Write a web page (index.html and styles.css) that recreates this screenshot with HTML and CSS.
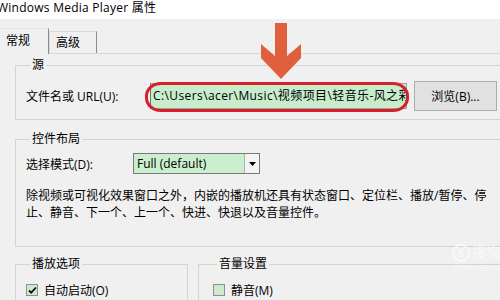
FILE: index.html
```html
<!DOCTYPE html>
<html>
	<head>
		<meta charset="utf-8">
		<title>Windows Media Player 属性</title>
		<link rel="stylesheet" href="styles.css">
	</head>

	<body>
		<!--Window caption-->
		<div class="titlebar"><span class="caption">Windows Media Player 属性</span></div>

		<!--Tab strip-->
		<div class="tabs">
			<div class="tab active">常规</div>
			<div class="tab">高级</div>
		</div>

		<div class="panel">
			<!--Source group-->
			<fieldset class="group source">
				<legend>源</legend>
				<div class="row">
					<span class="label url-label">文件名或 URL(U):</span>
					<div class="field">C:\Users\acer\Music\视频项目\轻音乐-风之彩.mp3</div>
					<button class="button">浏览(B)...</button>
				</div>
			</fieldset>

			<!--Layout group-->
			<fieldset class="group layout">
				<legend>控件布局</legend>
				<div class="row">
					<span class="label mode-label">选择模式(D):</span>
					<div class="select">
						<span class="select-text">Full (default)</span>
						<span class="select-btn">
							<svg width="7" height="4" viewBox="0 0 7 4"><path d="M0 0h7L3.5 4z" fill="#000"/></svg>
						</span>
					</div>
				</div>
				<p class="desc">除视频或可视化效果窗口之外，内嵌的播放机还具有状态窗口、定位栏、播放/暂停、停止、静音、下一个、上一个、快进、快退以及音量控件。</p>
			</fieldset>

			<!--Bottom groups-->
			<div class="split">
				<fieldset class="group play">
					<legend>播放选项</legend>
					<label class="check">
						<span class="box checked">
							<svg width="9" height="9" viewBox="0 0 9 9"><path d="M1 4.5l2.2 2.2L8 1.5" fill="none" stroke="#111" stroke-width="1.8"/></svg>
						</span>
						自动启动(O)
					</label>
				</fieldset>
				<fieldset class="group volume">
					<legend>音量设置</legend>
					<label class="check">
						<span class="box"></span>
						静音(M)
					</label>
				</fieldset>
			</div>
		</div>

		<!--Annotations drawn over the dialog-->
		<svg class="arrow" width="44" height="60" viewBox="0 0 44 60">
			<polygon points="14,0 26,0 26,33 40,21 40,35 20,56 0,35 0,21 14,33" fill="#e0603e"/>
		</svg>
		<div class="ring"></div>
		<div class="watermark">
			<span class="wm-logo">S</span><span class="wm-name">搜狗指南</span>
			<div class="wm-url">zhinan.sogou.com</div>
		</div>
	</body>
</html>
```

FILE: styles.css
```css
body {
	margin: 0;
	width: 500px;
	height: 300px;
	overflow: hidden;
	position: relative;
	background: #f0f0f0;
	font-family: "Open Sans", "Noto Sans CJK SC", sans-serif;
	font-size: 12px;
	color: #000;
}

.titlebar {
	height: 19px;
	background: #fff;
	line-height: 16px;
	white-space: nowrap;
}

.caption {
	margin-left: -3px;
	letter-spacing: 0.25px;
}

.tabs {
	display: flex;
	align-items: flex-end;
	height: 34px;
}

.tab {
	height: 21px;
	line-height: 21px;
	padding: 0 0 0 6px;
	width: 40px;
	border: 1px solid #d9d9d9;
	border-bottom: none;
	border-right: 1px solid #8c8c8c;
	background: #f0f0f0;
}

.tab.active {
	height: 25px;
	line-height: 24px;
	width: 42px;
	margin-left: -1px;
	margin-bottom: -1px;
	position: relative;
	z-index: 1;
	border-top-color: #e4e4e4;
}

.panel {
	width: 540px;
	border-top: 1px solid #d9d9d9;
	padding: 4px 0 0 15px;
}

.group {
	margin: 0;
	padding: 0 0 0 10px;
	border: 1px solid #d3d3d3;
	min-width: 0;
}

.group legend {
	padding: 0 2px;
	margin-left: 4px;
	line-height: 14px;
}

.row {
	display: flex;
	align-items: center;
}

.source .row {
	padding: 9px 0 8px;
}

.url-label {
	width: 124px;
}

.field {
	width: 253px;
	height: 24px;
	line-height: 23px;
	padding-left: 2px;
	border: 1px solid #a0a0a0;
	border-left-color: #6d6d6d;
	background: #c8edcd;
	white-space: nowrap;
	overflow: hidden;
	letter-spacing: 0.4px;
}

.button {
	margin-left: 7px;
	width: 83px;
	height: 30px;
	border: 1px solid #adadad;
	background: #e1e1e1;
	font: inherit;
	color: #000;
	padding: 0;
}

.layout {
	margin-top: 12px;
	padding-bottom: 25px;
}

.layout .row {
	padding-top: 7px;
}

.mode-label {
	width: 107px;
}

.select {
	display: flex;
	width: 125px;
	height: 19px;
	border: 1px solid #7a7a7a;
	background: #c9efcf;
}

.select-text {
	flex: 1;
	padding-left: 3px;
	line-height: 19px;
}

.select-btn {
	width: 14px;
	border-left: 1px solid #b0b0b0;
	background: #f4f4f4;
	display: flex;
	align-items: center;
	justify-content: center;
}

.desc {
	margin: 13px 0 0;
	width: 466px;
	line-height: 17px;
}

.split {
	display: flex;
	margin-top: 10px;
}

.play {
	width: 161px;
	height: 60px;
}

.volume {
	flex: 1;
	margin-left: 10px;
	padding-left: 14px;
	height: 60px;
}

.check {
	display: flex;
	align-items: center;
	gap: 6px;
	margin-top: 10px;
}

.box {
	width: 10px;
	height: 10px;
	border: 1px solid #8e8f8f;
	background: #cdeacd;
	display: flex;
	align-items: center;
	justify-content: center;
}

.arrow {
	position: absolute;
	left: 261px;
	top: 23px;
}

.ring {
	position: absolute;
	left: 145px;
	top: 82px;
	width: 258px;
	height: 24px;
	border: 3px solid #d8202c;
	border-radius: 16px / 14px;
}

.watermark {
	position: absolute;
	left: 452px;
	top: 243px;
	color: rgba(255, 255, 255, 0.6);
	white-space: nowrap;
	font-size: 14px;
	line-height: 18px;
}

.wm-logo {
	display: inline-block;
	width: 14px;
	height: 14px;
	border: 2px solid rgba(255, 255, 255, 0.6);
	border-radius: 50%;
	text-align: center;
	line-height: 14px;
	font-size: 11px;
	font-weight: bold;
	margin-right: 2px;
}

.wm-url {
	font-size: 7px;
	line-height: 9px;
}
```
